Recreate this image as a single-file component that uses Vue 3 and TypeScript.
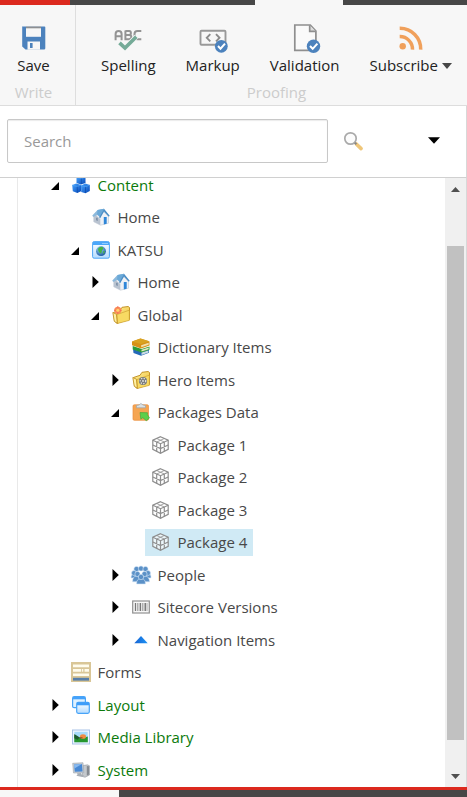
<script setup lang="ts">
interface TreeNode {
  label: string
  icon: string
  level: number
  state: 'open' | 'closed' | 'leaf'
  system?: boolean
  selected?: boolean
}

const tools = [
  { label: 'Spelling', icon: 'spelling' },
  { label: 'Markup', icon: 'markup' },
  { label: 'Validation', icon: 'validation' },
  { label: 'Subscribe', icon: 'rss', menu: true },
]

const nodes: TreeNode[] = [
  { label: 'Content', icon: 'cubes', level: 0, state: 'open', system: true },
  { label: 'Home', icon: 'home', level: 1, state: 'leaf' },
  { label: 'KATSU', icon: 'site', level: 1, state: 'open' },
  { label: 'Home', icon: 'home', level: 2, state: 'closed' },
  { label: 'Global', icon: 'folder', level: 2, state: 'open' },
  { label: 'Dictionary Items', icon: 'books', level: 3, state: 'leaf' },
  { label: 'Hero Items', icon: 'hero', level: 3, state: 'closed' },
  { label: 'Packages Data', icon: 'clipboard', level: 3, state: 'open' },
  { label: 'Package 1', icon: 'package', level: 4, state: 'leaf' },
  { label: 'Package 2', icon: 'package', level: 4, state: 'leaf' },
  { label: 'Package 3', icon: 'package', level: 4, state: 'leaf' },
  { label: 'Package 4', icon: 'package', level: 4, state: 'leaf', selected: true },
  { label: 'People', icon: 'people', level: 3, state: 'closed' },
  { label: 'Sitecore Versions', icon: 'barcode', level: 3, state: 'closed' },
  { label: 'Navigation Items', icon: 'up', level: 3, state: 'closed' },
  { label: 'Forms', icon: 'forms', level: 0, state: 'leaf' },
  { label: 'Layout', icon: 'layout', level: 0, state: 'closed', system: true },
  { label: 'Media Library', icon: 'media', level: 0, state: 'closed', system: true },
  { label: 'System', icon: 'system', level: 0, state: 'closed', system: true },
]
</script>

<template>
  <div class="app">
    <svg class="defs" width="0" height="0" aria-hidden="true">
      <defs>
        <linearGradient id="gBlue" x1="0" y1="0" x2="1" y2="1"><stop offset="0" stop-color="#48a5ff" /><stop offset="1" stop-color="#0648b8" /></linearGradient>
        <linearGradient id="gGold" x1="0" y1="0" x2="1" y2="1"><stop offset="0" stop-color="#fff3a0" /><stop offset="1" stop-color="#ecb92e" /></linearGradient>
        <linearGradient id="gWin" x1="0" y1="0" x2="0" y2="1"><stop offset="0" stop-color="#ffffff" /><stop offset="1" stop-color="#b5dcff" /></linearGradient>
        <linearGradient id="gUp" x1="0" y1="0" x2="1" y2="0"><stop offset="0" stop-color="#1763d2" /><stop offset="1" stop-color="#1d93f5" /></linearGradient>
        <radialGradient id="gGlobe" cx=".4" cy=".3" r=".75"><stop offset="0" stop-color="#9ad8f5" /><stop offset="1" stop-color="#14509c" /></radialGradient>
      </defs>
    </svg>

    <div class="tabs"><i class="tab-red"></i><i class="tab-dark"></i><i class="tab-active"></i><i class="tab-rest"></i></div>

    <header class="ribbon">
      <section class="group group-write">
        <div class="tools">
          <button class="tool">
            <svg class="tool-icon" viewBox="0 0 30 30">
              <path d="M4 3.500h22.500a.8.8 0 0 1 .8.8v21a1.300 1.300 0 0 1-1.300 1.300H7.500L4.200 23.400V4z" fill="#4c82bd" />
              <path d="M8 3.500h15v10.300H8z" fill="#f7f7f7" /><path d="M8 3.500h15v1.800H8z" fill="#8d8f92" />
              <path d="M9.500 18.500h12.500v8.200H9.500z" fill="#f7f7f7" /><path d="M12 20h2.600v5h-2.600z" fill="#4c82bd" />
            </svg>
            <span>Save</span>
          </button>
        </div>
        <div class="caption">Write</div>
      </section>
      <section class="group group-proof">
        <div class="tools">
          <button v-for="t in tools" :key="t.label" class="tool">
            <svg v-if="t.icon === 'spelling'" class="tool-icon" viewBox="0 0 30 30">
              <g fill="none" stroke="#949494" stroke-width="2">
                <path d="M2.600 17.200V11q0-3 3-3t3 3v6.200M2.600 13.300h6" />
                <path d="M12.400 8h3.800q1.700 0 1.700 2t-1.700 2h-3.800M16 12q2.400 0 2.400 2.100t-2.400 2.100h-3.600V7.500" />
                <path d="M28.300 8h-3.800q-3 0-3 3v2.500q0 2.700 3 2.700h3.800" />
              </g>
              <path d="m6.800 20 5 5L23.300 13.500" fill="none" stroke="#f7f7f7" stroke-width="5" />
              <path d="m6.500 19.800 5.500 5.200L23.300 13.800" fill="none" stroke="#75ab98" stroke-width="3.700" />
            </svg>
            <svg v-else-if="t.icon === 'markup'" class="tool-icon" viewBox="0 0 30 30">
              <rect x="2.500" y="7.800" width="25" height="14" rx="1" fill="none" stroke="#999" stroke-width="1.900" />
              <path d="M12.300 11.200 8.800 14.800l3.500 3.500M18 11.200l3.500 3.600-3.500 3.500" fill="none" stroke="#8b8b8b" stroke-width="1.900" />
              <circle cx="23.300" cy="23.300" r="6.400" fill="#4c82bd" /><path d="m20 23 2.500 2.700 4.500-5" fill="none" stroke="#fff" stroke-width="2" />
            </svg>
            <svg v-else-if="t.icon === 'validation'" class="tool-icon" viewBox="0 0 30 30">
              <path d="M4.800 2h15.500l5.600 6v19.300H4.800z" fill="#fafafa" stroke="#8f8f8f" stroke-width="1.700" />
              <path d="M19.700 2.300v6h6" fill="#ddd" stroke="#8f8f8f" stroke-width="1.700" />
              <circle cx="23.500" cy="23.200" r="6.700" fill="#4c82bd" /><path d="m20 23 2.700 2.800 4.700-5.200" fill="none" stroke="#fff" stroke-width="2" />
            </svg>
            <svg v-else class="tool-icon" viewBox="0 0 30 30">
              <circle cx="6.700" cy="23.300" r="3.200" fill="#f0a05b" />
              <path d="M3.700 13.600a12.600 12.600 0 0 1 12.800 13M3.700 5.300a20.700 20.700 0 0 1 21 21.300" fill="none" stroke="#f0a05b" stroke-width="3.500" />
            </svg>
            <span>{{ t.label }}<i v-if="t.menu" class="caret"></i></span>
          </button>
        </div>
        <div class="caption">Proofing</div>
      </section>
    </header>

    <div class="search">
      <input class="search-box" type="text" placeholder="Search" />
      <svg class="lens" viewBox="0 0 20 20">
        <path d="m13.300 13 4.800 4.600" stroke="#efc679" stroke-width="3.600" stroke-linecap="round" />
        <circle cx="7.500" cy="7.500" r="5.700" fill="#fcfcfc" stroke="#aaa" stroke-width="1.700" /><path d="m11.800 11.700 1.600 1.600" stroke="#888" stroke-width="2" />
      </svg>
      <svg class="search-menu" viewBox="0 0 12 7"><path d="M0 .3h12L6 6.800z" /></svg>
    </div>

    <div class="body">
      <div class="gutter"></div>
      <main class="tree">
        <div v-for="(n, i) in nodes" :key="i" class="row" :class="['level-' + n.level, { system: n.system }]">
          <span class="toggle">
            <svg v-if="n.state === 'closed'" width="7" height="12" viewBox="0 0 7 12"><path d="M.5 0 6.800 6 .5 12z" /></svg>
            <svg v-else-if="n.state === 'open'" class="open" width="8" height="8" viewBox="0 0 8 8"><path d="M8 0v8H0z" /></svg>
          </span>
          <span class="node" :class="{ selected: n.selected }">
            <svg class="icon" viewBox="0 0 18 18">
              <g v-if="n.icon === 'cubes'">
                <path d="m4.500 1 4.500-1 4.500 1v6L9 8.500 4.500 7z" fill="url(#gBlue)" />
                <path d="m.2 9 4-1.500L9 9v6.200L5.300 17 .8 15.200z" fill="url(#gBlue)" />
                <path d="m9 9.500 4.200-2L17.800 9v6l-4.300 2.300L9.200 16z" fill="url(#gBlue)" />
                <path d="M.5 9.200 5 10.500l4-1.500M9.200 9.800l4.300 1 4-1.700M4.700 1.300l4.500 1.300L13.300 1" fill="none" stroke="#4fa3f5" stroke-width=".7" />
                <path d="m5.200 10.500.2 6M13.500 11v6M9.300 2.500v5.500" stroke="#073c99" stroke-width=".5" />
              </g>
              <g v-else-if="n.icon === 'home'">
                <path d="M1.800 8.500v5.300l6.700 3.400 8-2V8.500L12 4z" fill="#eef1f6" stroke="#b4bcc8" stroke-width=".5" />
                <path d="m1.800 8 1.700-1 4.800 4v6l-6.500-3.200z" fill="#b9c3d0" />
                <path d="M.3 7.500 5.500 2l6.500-1.200-4 8.700-2.500-2.800L1.200 9z" fill="#8cb9dc" />
                <path d="m5.600 2 6.400-1.200L8 9 5 6.300z" fill="#6ba9d8" />
                <path d="m12 .8 5.700 7-.9 1L12 3.500 8.200 10.200l-1-.7z" fill="#4a8dc6" />
                <path d="M11.800 9h2.900v6.700l-2.900.7z" fill="#2f86d8" /><path d="M4 9.800h1.800V13L4 12.200z" fill="#8193aa" />
              </g>
              <g v-else-if="n.icon === 'site'">
                <rect x=".6" y=".6" width="16.800" height="16.600" rx="1.500" fill="url(#gWin)" stroke="#4da6f6" />
                <path d="M1 1h16v3H1z" fill="#4ba7fa" /><path d="M10.500 2.500h1m1 0h1m1 0h1" stroke="#d6efff" stroke-width="1.200" />
                <circle cx="9" cy="10.200" r="4.900" fill="url(#gGlobe)" /><path d="M6 7.700q2-3 5-1.500 1 2-1 3.300l-.7 3q-3-.5-3.300-4.800M11 10l2 .5-1.500 2.700z" fill="#45b446" />
              </g>
              <g v-else-if="n.icon === 'folder' || n.icon === 'hero'">
                <path d="M1.500 6.500 8 4.300l2-3 6.200-.8 1.300 1v12L5 17.300 2.500 15z" fill="url(#gGold)" stroke="#bd8a19" stroke-width=".9" />
                <path d="m5 8.500 12.300-4.300v10.200L5.300 17.500z" fill="#f8da63" stroke="#c89a2c" stroke-width=".6" />
                <path d="m.8 6.500 3.600 1.700.9 9.100-3-2z" fill="#fff0a2" stroke="#bd8a19" stroke-width=".8" />
                <g v-if="n.icon === 'folder'"><circle cx="5.800" cy="4.300" r="3.600" fill="#fa8c5a" /><circle cx="5.800" cy="4.300" r="1.500" fill="#ffd568" /><path d="M5.800 0v8M2 4.300h7.700" stroke="#f36a50" stroke-width=".8" stroke-dasharray="2 4" /></g>
                <g v-else><circle cx="11" cy="10" r="4.100" fill="#77797b" /><circle cx="11" cy="10" r="2.700" fill="none" stroke="#e3e3da" stroke-width="1.400" stroke-dasharray="1.300 1.300" /><circle cx="11" cy="10" r=".9" fill="#e8e8e0" /></g>
              </g>
              <g v-else-if="n.icon === 'books'">
                <path d="m1 11 9 3 7-2.500v3.200l-8 3L1.500 15z" fill="#2469b8" /><path d="m9.500 14.500 7-2v2l-7 2.600z" fill="#cbdbe4" />
                <path d="m.7 8 9 3 7.800-2.500v3.300l-8 2.700-8.800-3z" fill="#2b9b37" /><path d="m9.500 11.800 7.200-2.300v1.700L9.500 13.500z" fill="#e3e8c2" />
                <path d="m0 3.500 8.500-3 9 3v4L9 10.500 0 7.200z" fill="#d69116" /><path d="m0 3.500 8.500-3 9 2.800L9 6z" fill="#d9a322" /><path d="m9.200 7.300 7.500-2.500v1.900l-7.500 2.500z" fill="#f1e1b0" />
              </g>
              <g v-else-if="n.icon === 'clipboard'">
                <rect x="1" y="1.800" width="15.500" height="15.500" rx="1.300" fill="#f5a552" stroke="#e98e3e" stroke-width=".7" />
                <path d="M4.500 2.500 7 2q1.800-3 4 0l2.500.5v2.300h-9z" fill="#dae1e5" stroke="#98a4ac" stroke-width=".7" />
                <path d="m8 9.500 7.500.2-.2 1.600 2.200 3.700-3.200 2.700-3.500-3-2 1.500z" fill="#5ccf4a" stroke="#3aa53a" stroke-width=".6" />
              </g>
              <g v-else-if="n.icon === 'package'" fill="none" stroke="#8e8e8e" stroke-width="1.200">
                <path d="m8.500.7 7.700 3.500v9.200l-7.700 4-7.700-4V4.200z" fill="#fff" fill-opacity=".6" /><path d="m.8 4.200 7.700 3.500 7.700-3.500M8.500 7.700v9.700M4.700 6v9.400M12.300 6v9.400M.8 9l7.700 3.600L16.200 9" />
                <path d="m4.700 2.500 7.600 3.500m0-3.500L4.700 6" stroke-width=".8" />
              </g>
              <g v-else-if="n.icon === 'people'" fill="#5b91c7" stroke="#d7e8f8" stroke-width=".6">
                <path d="M-1 12q0-4.500 4-4.500T6.500 12zM11.500 12q0-4.500 4-4.500t3.500 4.500z" /><circle cx="4.500" cy="3" r="2.600" /><circle cx="9" cy="2.500" r="2.600" /><circle cx="13.500" cy="3" r="2.600" />
                <circle cx="2" cy="7" r="2.500" /><circle cx="16" cy="7" r="2.500" />
                <path d="M.5 15.800q0-5.600 4-5.600t4.300 5.600zM9.300 15.800q0-5.600 4-5.600t4.300 5.600z" /><path d="M4.500 18q0-5.500 4.500-5.500t4.500 5.500z" />
                <circle cx="5.500" cy="8" r="2.600" /><circle cx="12.500" cy="8" r="2.600" /><circle cx="9" cy="11" r="2.700" />
              </g>
              <g v-else-if="n.icon === 'barcode'">
                <rect x=".7" y="3" width="16.600" height="12" fill="#f7f7f7" stroke="#919191" stroke-width="1.200" />
                <path d="M3.500 5v8M8.500 5v8M13.300 5v8" stroke="#777" stroke-width="1.300" /><path d="M5.500 5v8M7 5v8M10.500 5v8M12 5v8M15 5v8" stroke="#9a9a9a" stroke-width=".8" />
              </g>
              <path v-else-if="n.icon === 'up'" d="M2.300 12.300 9 5l6.700 7.300z" fill="url(#gUp)" />
              <g v-else-if="n.icon === 'forms'">
                <path d="M-1-1h20v20H-1z" fill="#d9c697" /><path d="M1 1.500h16v2.700H1zM1 6h8v2.700H1zM12.500 6H17v2.700h-4.500zM1 10.500h16v2.500H1z" fill="#fffced" /><path d="M9.800 6h1.500v2.700H9.800z" fill="#fffced" /><path d="M1 14.800h16v2.800H1z" fill="#587fa9" />
              </g>
              <g v-else-if="n.icon === 'layout'">
                <rect x=".6" y=".7" width="12.800" height="11" rx="1.500" fill="#dff1ff" stroke="#48a4f8" stroke-width="1.200" /><path d="M1 1h12v2.300H1z" fill="#45a2fb" />
                <rect x="4.700" y="6.300" width="12.600" height="11" rx="1.500" fill="url(#gWin)" stroke="#48a4f8" stroke-width="1.200" /><path d="M5 6.500h12v2.800H5z" fill="#3e9df9" />
              </g>
              <g v-else-if="n.icon === 'media'">
                <rect x=".5" y="2" width="17" height="14" fill="#eef5ff" stroke="#a9c3e7" /><path d="M2.300 3.800h13.400v10.500H2.300z" fill="#a6dafa" />
                <path d="m2.300 7 5 2.500 3.500.5 5-1.500v5.800H2.300z" fill="#26972e" /><path d="m2.300 6 5.500 3.500-2.300 2.300-3.200-1.500z" fill="#1d5a30" /><ellipse cx="11" cy="8.500" rx="3" ry="2.300" fill="#f18b40" /><path d="M7.500 9.800h3" stroke="#8c4520" />
              </g>
              <g v-else>
                <path d="m11 4.500 4.500-.7 2 1v9.200l-4.500 2.300-3-1z" fill="#c4c8cc" stroke="#858b92" stroke-width=".5" /><path d="m14.800 5 2.200.2v8.300l-2.200 1.300z" fill="#858a90" />
                <path d="M.7 2.300 11 1.700l.8 10L1.500 12z" fill="#c5cbd2" stroke="#9ea6af" stroke-width=".6" /><path d="m2 3.500 7.900-.4.700 7.300-7.800.3z" fill="#4788d4" /><path d="m2 3.500 7.900-.4L2.400 7.500z" fill="#88baf0" />
                <path d="m5 12.200 4-.2.500 1.500 2.800 1.300-2 1.200-6-1.300 1.200-.9z" fill="#a7adb4" />
              </g>
            </svg>
            <span class="label">{{ n.label }}</span>
          </span>
        </div>
      </main>
      <div class="scrollbar">
        <svg class="arrow-up" width="9" height="5" viewBox="0 0 9 5"><path d="M4.500 0 9 5H0z" /></svg>
        <div class="thumb"></div>
        <svg class="arrow-down" width="9" height="5" viewBox="0 0 9 5"><path d="M0 0h9L4.500 5z" /></svg>
      </div>
    </div>
    <footer class="bottom"><i></i></footer>
  </div>
</template>

<style>
body { background: #fff; }
</style>

<style scoped>
.app { display: flex; flex-direction: column; width: 467px; height: 797px; overflow: hidden; background: #fff; color: #484848; font-family: "Open Sans", "Noto Sans", sans-serif; font-size: 15px; line-height: 20px; }
.app * { box-sizing: border-box; }
.defs { position: absolute; }
svg { display: block; overflow: visible; flex: none; }
.tabs { display: flex; flex: none; height: 5px; background: #474747; }
.tab-red { width: 70px; background: #dc291e; }
.tab-dark { width: 185px; }
.tab-active { width: 88px; background: #f7f7f7; }
.ribbon { display: flex; flex: none; height: 101px; background: #f7f7f7; border-bottom: 1px solid #ddd; }
.group { display: flex; flex: none; flex-direction: column; align-items: center; padding-top: 18px; }
.group-write { width: 76px; padding-right: 8px; border-right: 1px solid #dedede; }
.group-proof { width: 391px; padding-left: 10px; }
.tools { display: flex; }
.tool { display: flex; flex-direction: column; align-items: center; padding: 0 15px; border: 0; background: none; font: inherit; color: #222; }
.tool > span { display: flex; align-items: center; height: 20px; margin-top: 2px; white-space: nowrap; }
.tool-icon { width: 30px; height: 30px; }
.caret { margin: 2px 0 0 4px; border: 5px solid transparent; border-top: 6px solid #474747; border-bottom: 0; }
.caption { margin-top: 7px; color: #ccc; }
.search { display: flex; flex: none; align-items: center; height: 72px; padding: 0 26px 2px 7px; border-right: 1px solid #d8d8d8; border-bottom: 1px solid #d0d0d0; }
.search-box { width: 321px; height: 44px; padding: 0 16px; border: 1px solid #c8c8c8; border-radius: 2px; outline: 0; background: #fff; box-shadow: inset 0 1px 1px rgba(0, 0, 0, .08); font: inherit; }
.search-box::placeholder { color: #999; opacity: 1; }
.lens { width: 20px; height: 20px; margin-left: 15px; }
.search-menu { width: 12px; height: 7px; margin: 0 0 1px auto; }
.body { display: flex; flex: none; height: 609px; overflow: hidden; border-right: 1px solid #d8d8d8; }
.gutter { width: 18px; border-right: 1px solid #e9e9e9; }
.tree { flex: 1; margin-top: -9.4px; }
.row { display: flex; align-items: center; height: 32.5px; padding-left: 33px; }
.level-1 { padding-left: 53px; }
.level-2 { padding-left: 73px; }
.level-3 { padding-left: 93px; }
.level-4 { padding-left: 113px; }
.toggle { width: 14px; padding-left: 1px; }
.toggle .open { margin: 2px 0 0 -1px; }
.node { display: flex; align-items: center; gap: 7.5px; height: 27px; padding: 0 5.500px 0 7px; white-space: nowrap; }
.selected { background: #d0eaf5; }
.icon { width: 18px; height: 18px; }
.system { color: #0b7a0b; }
.scrollbar { display: flex; flex-direction: column; align-items: center; width: 21px; padding: 9px 0 8px; background: #f0f0f0; fill: #505050; }
.thumb { width: 17px; height: 494px; margin-top: 54px; background: #c1c1c1; }
.arrow-down { margin-top: auto; }
.bottom { flex: none; height: 10px; border-top: 3px solid #dc291e; background: #474747; }
.bottom i { display: block; width: 119px; height: 7px; background: #f7f7f7; }
</style>
